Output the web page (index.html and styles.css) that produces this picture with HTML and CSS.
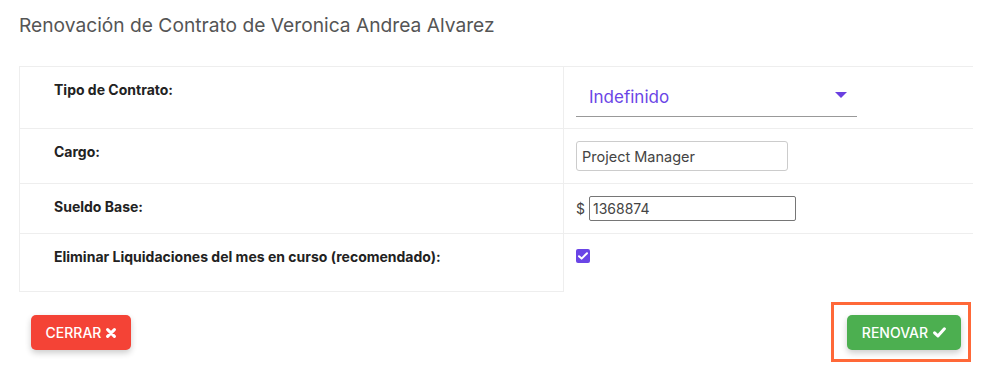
FILE: index.html
```html
<!DOCTYPE html>
<html lang="es">
<head>
    <meta charset="UTF-8">
    <meta name="viewport" content="width=device-width, initial-scale=1.0">
    <title>Renovación de Contrato</title>
    <link rel="stylesheet" href="styles.css">
</head>
<body>
    <div class="modal">
        <h2 class="modal-title">Renovación de Contrato de Veronica Andrea Alvarez</h2>

        <table class="form-table">
            <tr class="row-tipo">
                <th>Tipo de Contrato:</th>
                <td>
                    <div class="select">
                        <span>Indefinido</span>
                        <svg class="caret" width="12" height="7" viewBox="0 0 12 7"><path d="M0 0h12L6 6z" fill="#6a3fe0"/></svg>
                    </div>
                </td>
            </tr>
            <tr class="row-cargo">
                <th>Cargo:</th>
                <td><input class="input input-cargo" type="text" value="Project Manager"></td>
            </tr>
            <tr class="row-sueldo">
                <th>Sueldo Base:</th>
                <td><span class="currency">$</span><input class="input input-sueldo" type="text" value="1368874"></td>
            </tr>
            <tr class="row-eliminar">
                <th>Eliminar Liquidaciones del mes en curso (recomendado):</th>
                <td>
                    <span class="check">
                        <svg width="10" height="8" viewBox="0 0 10 8"><path d="M1 4.2l2.6 2.4L9 1.2" fill="none" stroke="#fff" stroke-width="2" stroke-linecap="round" stroke-linejoin="round"/></svg>
                    </span>
                </td>
            </tr>
        </table>

        <div class="footer">
            <button class="btn btn-red">CERRAR
                <svg width="10" height="10" viewBox="0 0 10 10"><path d="M1.6 1.6l6.8 6.8M8.4 1.6L1.6 8.4" stroke="#fff" stroke-width="3" stroke-linecap="round"/></svg>
            </button>
            <div class="highlight">
                <button class="btn btn-green">RENOVAR
                    <svg width="13" height="11" viewBox="0 0 13 11"><path d="M1.6 5.8l3.3 3.2L11.4 1.8" fill="none" stroke="#fff" stroke-width="3" stroke-linecap="round" stroke-linejoin="round"/></svg>
                </button>
            </div>
        </div>
    </div>
</body>
</html>
```

FILE: styles.css
```css
body {
    margin: 0;
    font-family: Inter, "Noto Sans", sans-serif;
    color: #333;
    background-color: #fff;
}
.modal {
    padding: 0 13px 0 19px;
}
.modal-title {
    margin: 0;
    padding-top: 13px;
    height: 66px;
    box-sizing: border-box;
    font-size: 19.2px;
    font-weight: 400;
    color: #555;
}
.form-table {
    width: 100%;
    border-collapse: collapse;
}
.form-table th,
.form-table td {
    vertical-align: top;
    border-top: 1px solid #eee;
}
.form-table th {
    width: 509px;
    padding: 14px 0 0 34px;
    text-align: left;
    font-size: 14px;
    font-weight: 700;
    color: #222;
    border-left: 1px solid #eee;
    border-right: 1px solid #eee;
}
.form-table td {
    padding: 12px 0 0 12px;
    font-size: 14px;
}
.form-table tr:last-child th {
    border-bottom: 1px solid #eee;
}
.row-tipo { height: 62px; }
.row-cargo { height: 55px; }
.row-sueldo { height: 50px; }
.row-eliminar { height: 58px; }
.row-tipo td { padding-top: 13px; }
.row-eliminar td { padding-top: 15px; }

.select {
    display: flex;
    align-items: center;
    justify-content: space-between;
    width: 281px;
    height: 37px;
    box-sizing: border-box;
    padding: 0 10px 2px 13px;
    border-bottom: 1px solid #999;
    font-size: 17px;
    color: #6a45e6;
}
.caret {
    margin-top: -3px;
}
.input {
    font-family: inherit;
    color: #444;
    box-sizing: border-box;
    margin: 0;
    outline: none;
}
.input-cargo {
    width: 212px;
    height: 30px;
    padding: 0 5px;
    font-size: 14.5px;
    border: 1px solid #ccc;
    border-radius: 3px;
}
.input-sueldo {
    width: 207px;
    height: 25px;
    padding: 0 3px;
    font-size: 14px;
    border: 1px solid #767676;
    border-radius: 2px;
    margin-left: 4px;
}
.currency {
    font-size: 14px;
    color: #444;
}
.check {
    display: flex;
    align-items: center;
    justify-content: center;
    width: 14px;
    height: 14px;
    border-radius: 2px;
    background-color: #6a45e6;
}
.footer {
    display: flex;
    justify-content: space-between;
    align-items: flex-start;
    margin-top: 10px;
    padding: 0 2px 0 12px;
}
.btn {
    display: flex;
    align-items: center;
    justify-content: center;
    gap: 5px;
    height: 35px;
    padding: 0;
    border: none;
    border-radius: 5px;
    font-family: inherit;
    font-size: 14px;
    font-weight: 500;
    color: #fff;
    box-shadow: 0 3px 6px rgba(0, 0, 0, 0.2);
    cursor: pointer;
}
.btn-red {
    margin-top: 13px;
    width: 100px;
    background-color: #f44336;
}
.btn-green {
    width: 114px;
    background-color: #4caf50;
}
.highlight {
    border: 3px solid #ff6838;
    padding: 10px 7px 9px 13px;
}
```
